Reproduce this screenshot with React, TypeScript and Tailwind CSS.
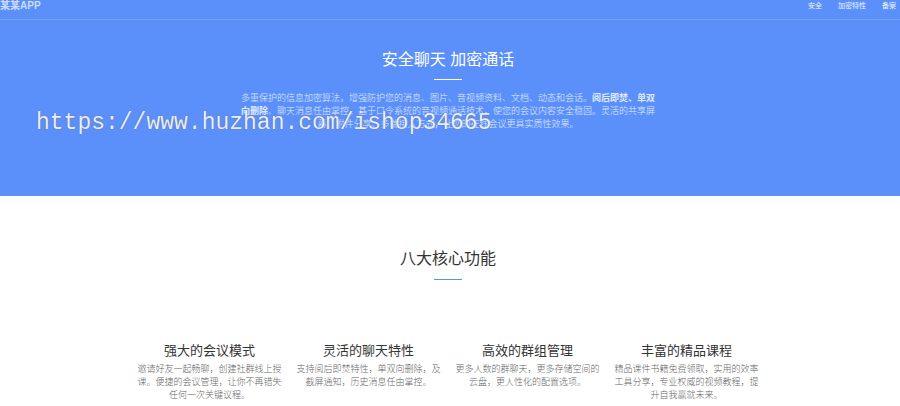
const navLinks = ['安全', '加密特性', '备案']

const features = [
  {
    title: '强大的会议模式',
    text: '邀请好友一起畅聊，创建社群线上授课。便捷的会议管理，让你不再错失任何一次关键议程。',
  },
  {
    title: '灵活的聊天特性',
    text: '支持阅后即焚特性，单双向删除，及截屏通知，历史消息任由掌控。',
  },
  {
    title: '高效的群组管理',
    text: '更多人数的群聊天，更多存储空间的云盘，更人性化的配置选项。',
  },
  {
    title: '丰富的精品课程',
    text: '精品课件书籍免费领取，实用的效率工具分享，专业权威的视频教程，提升自我赢就未来。',
  },
]

function Header() {
  return (
    <header className="flex h-5 items-start justify-between border-b border-[#74a2ff] pr-1">
      <a href="#" className="text-[10px] leading-3 font-bold text-white/70">某某APP</a>
      <nav className="flex gap-4">
        {navLinks.map((link) => (
          <a key={link} href="#" className="text-[7px] leading-3 text-white/90">{link}</a>
        ))}
      </nav>
    </header>
  )
}

function Hero() {
  return (
    <section className="flex flex-col items-center pt-7 pr-1 pb-16 text-white">
      <h1 className="text-[16px] leading-6">安全聊天 加密通话</h1>
      <div className="mt-[7px] h-px w-7 bg-white" />
      <p className="mt-3 mb-px w-[416px] text-center text-[9px] leading-[13px] font-light text-white/80">
        多重保护的信息加密算法，增强防护您的消息、图片、音视频资料、文档、动态和会话。<strong className="font-bold">阅后即焚、单双向删除</strong>、聊天消息任由掌控。基于口令系统的音视频通话技术，使您的会议内容安全稳固。灵活的共享屏幕、附件分享、多端接入方式，让您的在线会议更具实质性效果。
      </p>
    </section>
  )
}

export default function App() {
  return (
    <div className="relative overflow-hidden bg-white font-['Liberation_Sans','Noto_Sans_CJK_SC',sans-serif]">
      <div className="bg-[#5b90fb]">
        <Header />
        <Hero />
      </div>
      <section className="flex flex-col items-center pt-[51px] pr-1">
        <h2 className="text-[16px] leading-6 text-[#333]">八大核心功能</h2>
        <div className="mt-2 h-px w-7 bg-[#5b90fb]" />
        <div className="mt-[61px] grid grid-cols-4 gap-x-[15px]">
          {features.map((feature) => (
            <article key={feature.title} className="w-36 text-center">
              <h3 className="text-[13px] leading-5 text-[#333]">{feature.title}</h3>
              <p className="mt-0.5 text-[9px] leading-[13px] font-light text-[#666]">{feature.text}</p>
            </article>
          ))}
        </div>
      </section>
      <div className="pointer-events-none absolute top-[109px] left-9 font-['Liberation_Mono',monospace] text-[23px] leading-7 whitespace-nowrap text-[#e8eefc] [text-shadow:0_0_1px_#556]">
        https://www.huzhan.com/ishop34665
      </div>
    </div>
  )
}
